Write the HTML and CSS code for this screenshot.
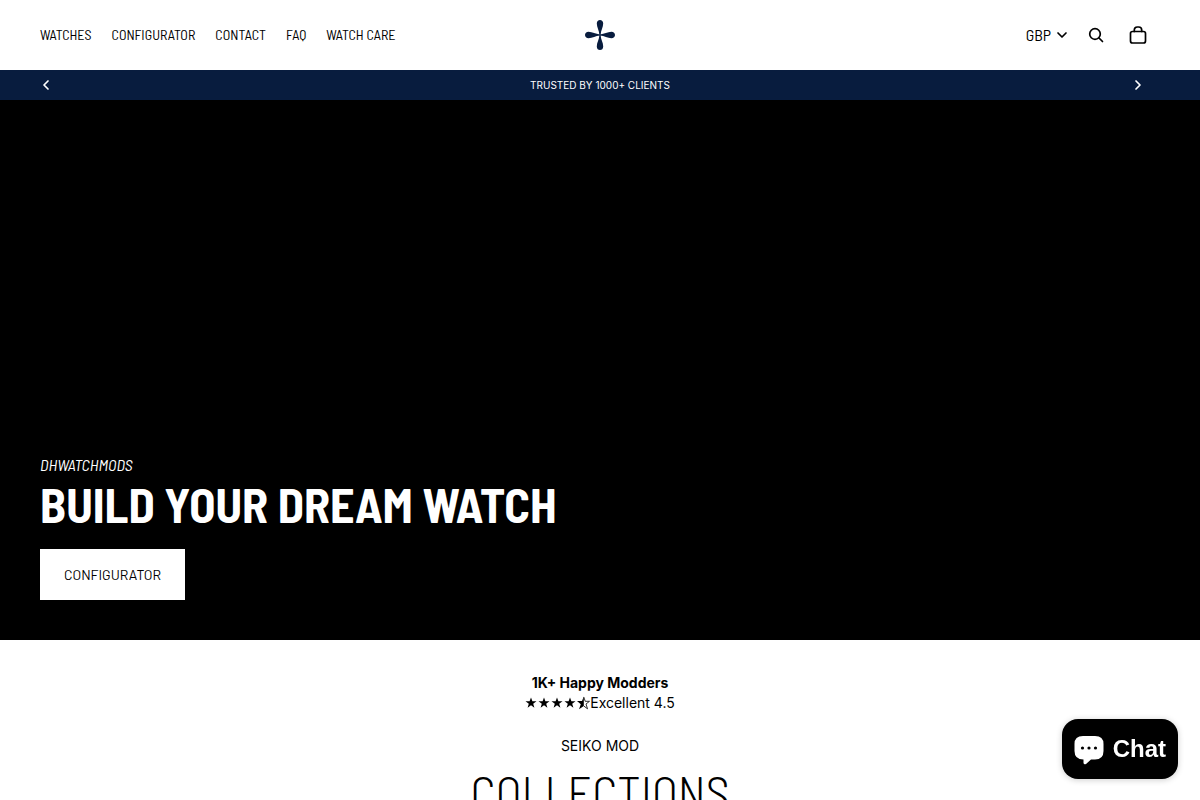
FILE: index.html
```html
<!DOCTYPE html>
<html lang="en">
<head>
	<meta charset="UTF-8">
	<meta name="viewport" content="width=device-width, initial-scale=1">
	<title>DHWatchMods</title>
	<link rel="stylesheet" href="styles.css">
</head>
<body>
	<header class="header">
		<nav class="nav">
			<a href="#">Watches</a>
			<a href="#">Configurator</a>
			<a href="#">Contact</a>
			<a href="#">FAQ</a>
			<a href="#">Watch Care</a>
		</nav>
		<a class="logo" href="#" aria-label="Home">
			<svg width="30" height="30" viewBox="0 0 30 30" fill="#081c3e">
				<path id="petal" d="M14.400 15C14.200 10.500 11.800 7.500 11.800 3.600C11.800 1.400 13.200 0 15 0S18.200 1.400 18.200 3.600C18.200 7.500 15.800 10.500 15.600 15Z"/>
				<use href="#petal" transform="rotate(90 15 15)"/>
				<use href="#petal" transform="rotate(180 15 15)"/>
				<use href="#petal" transform="rotate(270 15 15)"/>
			</svg>
		</a>
		<div class="actions">
			<button class="currency" type="button">
				GBP
				<svg width="12" height="12" viewBox="0 0 12 12"><path d="M2 4L6 8L10 4"/></svg>
			</button>
			<button class="icon" type="button" aria-label="Search">
				<svg width="20" height="20" viewBox="0 0 20 20"><circle cx="9" cy="9" r="5.300"/><path d="M13 13L16.500 16.500"/></svg>
			</button>
			<button class="icon" type="button" aria-label="Cart">
				<svg width="20" height="20" viewBox="0 0 20 20"><rect x="2.500" y="6.500" width="15" height="11.500" rx="2"/><path d="M6.300 6.500V5A3 3 0 0 1 9.300 2H10.700A3 3 0 0 1 13.700 5V6.500"/></svg>
			</button>
		</div>
	</header>

	<div class="announcement">
		<button class="arrow" type="button" aria-label="Previous">
			<svg width="12" height="12" viewBox="0 0 12 12"><path d="M8 2L4 6L8 10"/></svg>
		</button>
		<p>Trusted by 1000+ clients</p>
		<button class="arrow" type="button" aria-label="Next">
			<svg width="12" height="12" viewBox="0 0 12 12"><path d="M4 2L8 6L4 10"/></svg>
		</button>
	</div>

	<main>
		<section class="hero">
			<p class="brand">DHWatchMods</p>
			<h1>Build your dream watch</h1>
			<a class="btn" href="#">Configurator</a>
		</section>

		<section class="collections">
			<p class="happy">1K+ Happy Modders</p>
			<div class="rating">
				<svg width="65" height="14" viewBox="0 0 65 14" aria-hidden="true">
					<path id="star" d="M6 1.500L7.400 5.300H11.500L8.200 7.700L9.400 11.700L6 9.300L2.600 11.700L3.800 7.700L0.500 5.300H4.600Z"/>
					<use href="#star" x="13"/>
					<use href="#star" x="26"/>
					<use href="#star" x="39"/>
					<path d="M58.800 0.500V10L54 13.200L55.800 8.200L52 5H57Z"/>
					<path d="M58.800 1L60.200 5.300H64.500L61 8L62.500 12.800L58.800 10" fill="none" stroke="#000" stroke-width=".8"/>
				</svg>
				<span>Excellent 4.5</span>
			</div>
			<p class="eyebrow">Seiko Mod</p>
			<h2>Collections</h2>
		</section>
	</main>

	<button class="chat" type="button">
		<svg width="30" height="30" viewBox="0 0 30 30">
			<path d="M9 2H21Q29.500 2 29.500 10V17Q29.500 25.500 21 25.500H17L12 30Q10 31 9.500 29V25.500Q0.500 25.500 0.500 17V10Q0.500 2 9 2Z" fill="#fff"/>
			<circle cx="8.500" cy="14" r="1.600"/>
			<circle cx="15" cy="14" r="1.600"/>
			<circle cx="21.500" cy="14" r="1.600"/>
		</svg>
		Chat
	</button>
</body>
</html>
```
FILE: styles.css
```css
* {
	box-sizing: border-box;
}
body {
	margin: 0;
	background: #fff;
	color: #000;
	font-family: Inter, "Liberation Sans", sans-serif;
	font-size: 14px;
	line-height: 20px;
}
h1, h2, p {
	margin: 0;
}
a {
	color: inherit;
	text-decoration: none;
}
button {
	border: 0;
	padding: 0;
	background: none;
	color: inherit;
	cursor: pointer;
}
svg {
	display: block;
}
.header, .hero, .collections h2 {
	font-family: "Barlow Semi Condensed", "Barlow Condensed", "Liberation Sans Narrow", Roboto, sans-serif;
	text-transform: uppercase;
}

/* header */
.header {
	display: grid;
	grid-template-columns: 1fr auto 1fr;
	align-items: center;
	height: 70px;
	padding: 0 40px;
}
.nav {
	display: flex;
	gap: 20px;
}
.actions {
	display: flex;
	justify-content: flex-end;
	align-items: center;
	padding-right: 1px;
}
.actions svg, .arrow svg {
	fill: none;
	stroke: currentColor;
	stroke-width: 1.7;
	stroke-linecap: round;
	stroke-linejoin: round;
}
.currency {
	display: flex;
	align-items: center;
	gap: 5px;
	margin-right: 7px;
	font-family: inherit;
	font-size: 16px;
	line-height: 18px;
}
.icon {
	display: grid;
	place-items: center;
	width: 42px;
	height: 42px;
}

/* announcement bar */
.announcement {
	display: flex;
	justify-content: space-between;
	align-items: center;
	height: 30px;
	padding: 0 56px 0 40px;
	background: #081c3e;
	color: #fff;
	font-size: 10px;
	text-transform: uppercase;
}
.announcement p {
	flex: 1;
	padding-left: 16px;
	text-align: center;
}

/* hero */
.hero {
	display: flex;
	flex-direction: column;
	justify-content: flex-end;
	align-items: flex-start;
	min-height: 540px;
	padding: 40px;
	background: #000;
	color: #fff;
}
.brand {
	font-size: 16px;
	font-style: italic;
}
.hero h1 {
	margin: 3px 0 19px;
	font-size: 48px;
	font-weight: 700;
	line-height: 52px;
}
.btn {
	padding: 16px 24px 15px;
	background: #fff;
	color: #000;
	font-family: Barlow, "Barlow Semi Condensed", sans-serif;
}

/* collections */
.collections {
	padding: 33px 40px;
	text-align: center;
}
.happy {
	font-weight: 700;
}
.rating {
	display: flex;
	justify-content: center;
	align-items: center;
}
.eyebrow {
	margin: 23px 0 10px;
	text-transform: uppercase;
}
.collections h2 {
	font-size: 48px;
	font-weight: 300;
	line-height: 52px;
}

/* chat */
.chat {
	position: fixed;
	right: 22px;
	bottom: 21px;
	display: flex;
	align-items: center;
	gap: 9px;
	height: 60px;
	padding: 0 12px;
	border-radius: 16px;
	background: #000;
	color: #fff;
	box-shadow: 0 1px 6px rgba(0, 0, 0, 0.2);
	font: 700 24px "Liberation Sans", Arial, sans-serif;
}
.chat svg {
	overflow: visible;
}
```
